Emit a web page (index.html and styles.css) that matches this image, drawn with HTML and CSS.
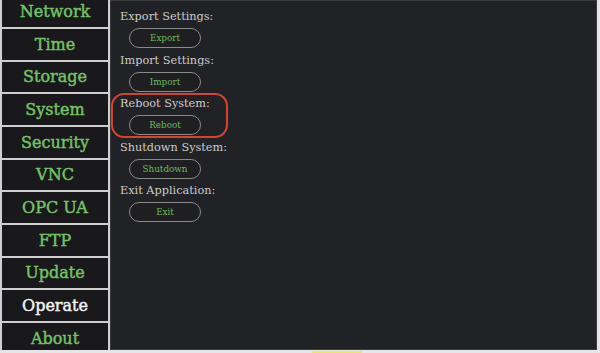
FILE: index.html
```html
<!DOCTYPE html>
<html>
<head>
<meta charset="utf-8">
<link rel="stylesheet" href="styles.css">
</head>
<body>
<div class="app">
  <nav class="sidebar">
    <div class="nav-item">Network</div>
    <div class="nav-item">Time</div>
    <div class="nav-item">Storage</div>
    <div class="nav-item">System</div>
    <div class="nav-item">Security</div>
    <div class="nav-item">VNC</div>
    <div class="nav-item">OPC UA</div>
    <div class="nav-item">FTP</div>
    <div class="nav-item">Update</div>
    <div class="nav-item active">Operate</div>
    <div class="nav-item">About</div>
  </nav>
  <main class="panel">
    <div class="group">
      <div class="label">Export Settings:</div>
      <button class="pill">Export</button>
    </div>
    <div class="group">
      <div class="label">Import Settings:</div>
      <button class="pill">Import</button>
    </div>
    <div class="group highlighted">
      <div class="label">Reboot System:</div>
      <button class="pill">Reboot</button>
      <div class="ring"></div>
    </div>
    <div class="group">
      <div class="label">Shutdown System:</div>
      <button class="pill">Shutdown</button>
    </div>
    <div class="group">
      <div class="label">Exit Application:</div>
      <button class="pill">Exit</button>
    </div>
  </main>
</div>
<div class="marker"></div>
</body>
</html>
```

FILE: styles.css
```css
html, body {
  margin: 0;
  padding: 0;
}
body {
  width: 600px;
  height: 353px;
  background: #e6e6e6;
  position: relative;
  overflow: hidden;
  font-family: "DejaVu Serif", "Liberation Serif", serif;
}
.app {
  display: flex;
  height: 350px;
  width: 597px;
  overflow: hidden;
  background: #cfcfcf;
}
.sidebar {
  width: 106px;
  margin-left: 2px;
  margin-top: -3.7px;
  display: grid;
  grid-auto-rows: 30.67px;
  row-gap: 2px;
  align-content: start;
}
.nav-item {
  background: #19191b;
  color: #74c266;
  font-family: "DejaVu Serif", serif;
  font-size: 16px;
  -webkit-text-stroke: 0.45px currentColor;
  display: flex;
  align-items: center;
  justify-content: center;
}
.nav-item.active {
  color: #f2f2f2;
}
.panel {
  flex: 1;
  margin-left: 2px;
  background: #212225;
  border: 1px solid #3a3b3e;
  padding: 7px 0 0 9px;
  display: flex;
  flex-direction: column;
  gap: 3.5px;
}
.group {
  position: relative;
  display: flex;
  flex-direction: column;
  align-items: flex-start;
  gap: 3px;
}
.label {
  color: #cbcbcb;
  font-size: 11.3px;
  line-height: 17px;
}
.pill {
  margin-left: 9px;
  width: 72px;
  height: 20px;
  border-radius: 10px;
  border: 1px solid #8a8a8a;
  background: #1f1f21;
  color: #6cbc5e;
  font-family: "DejaVu Serif", "Liberation Serif", serif;
  font-size: 8.8px;
  padding: 0;
}
.ring {
  position: absolute;
  box-sizing: border-box;
  left: -9px;
  top: -2px;
  width: 117px;
  height: 45px;
  border: 2px solid #d9432e;
  border-radius: 13px;
  pointer-events: none;
}
.marker {
  position: absolute;
  left: 312px;
  top: 351px;
  width: 50px;
  height: 2px;
  background: #f3e64c;
}
```
